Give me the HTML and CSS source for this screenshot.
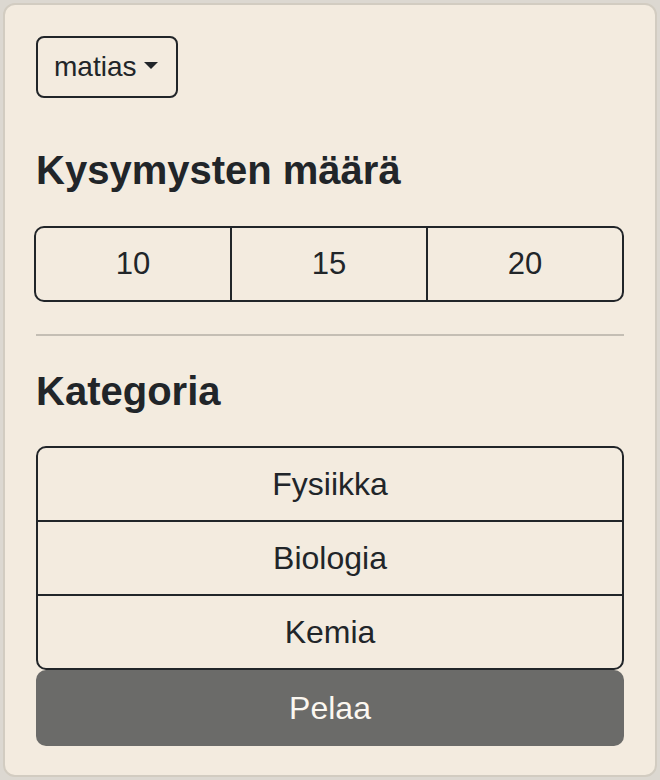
FILE: index.html
```html
<!DOCTYPE html>
<html lang="fi">
<head>
<meta charset="utf-8">
<title>Peli</title>
<link rel="stylesheet" href="styles.css">
</head>
<body>
<div class="card">
  <div class="top">
    <button class="dropdown">matias<span class="caret"></span></button>
  </div>
  <h2 class="title first">Kysymysten määrä</h2>
  <div class="segment">
    <button class="seg">10</button>
    <button class="seg">15</button>
    <button class="seg">20</button>
  </div>
  <hr class="rule">
  <h2 class="title">Kategoria</h2>
  <div class="list">
    <button class="item">Fysiikka</button>
    <button class="item">Biologia</button>
    <button class="item">Kemia</button>
  </div>
  <button class="play">Pelaa</button>
</div>
</body>
</html>
```
FILE: styles.css
```css
html, body {
  margin: 0;
  padding: 0;
}
body {
  background: #dcd8d1;
  padding: 3px;
  font-family: "Liberation Sans", Arial, sans-serif;
  color: #212529;
}
.card {
  box-sizing: border-box;
  width: 654px;
  height: 774px;
  background: #f3ebdf;
  border: 2px solid #d2ccc1;
  border-radius: 12px;
  padding: 31px 31px 29px 31px;
  display: flex;
  flex-direction: column;
}
button {
  font-family: inherit;
  color: #212529;
  background: transparent;
  cursor: pointer;
}
.top {
  display: flex;
}
.dropdown {
  box-sizing: border-box;
  height: 62px;
  width: 142px;
  border: 2px solid #212529;
  border-radius: 8px;
  font-size: 28px;
  line-height: 34px;
  padding: 0 0 0 16px;
  display: flex;
  align-items: center;
}
.caret {
  display: inline-block;
  width: 0;
  height: 0;
  border-top: 7px solid #212529;
  border-left: 7px solid transparent;
  border-right: 7px solid transparent;
  margin-left: 8px;
  margin-top: -4px;
}
.title {
  font-size: 40px;
  line-height: 48px;
  font-weight: bold;
  margin: 31px 0 31px 0;
}
.title.first {
  margin-top: 48px;
  margin-bottom: 32px;
}
.segment {
  display: flex;
  border: 2px solid #212529;
  border-radius: 10px;
  overflow: hidden;
  margin-left: -2px;
}
.seg {
  flex: 1;
  border: none;
  border-left: 2px solid #212529;
  font-size: 31px;
  line-height: 36px;
  padding: 18px 0;
}
.seg:first-child {
  border-left: none;
}
.rule {
  border: none;
  height: 2px;
  background: #c4beb4;
  margin: 32px 0 0 0;
}
.list {
  display: flex;
  flex-direction: column;
  border: 2px solid #212529;
  border-radius: 10px;
  overflow: hidden;
}
.item {
  border: none;
  border-top: 2px solid #212529;
  font-size: 32px;
  line-height: 37px;
  padding: 18px 0 17px 0;
}
.item:first-child {
  border-top: none;
}
.play {
  margin-top: 0;
  height: 76px;
  border: none;
  border-radius: 10px;
  background: #6b6b69;
  color: #fbf7f0;
  font-size: 32px;
  line-height: 37px;
}
```
